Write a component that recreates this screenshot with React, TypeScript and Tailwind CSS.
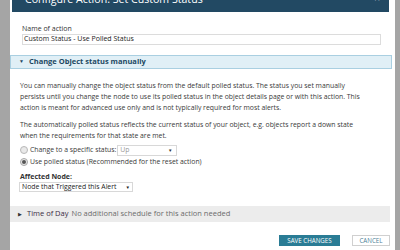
import React from "react";

export default function App() {
  const font = { fontFamily: '"Open Sans", "Noto Sans", sans-serif' };
  return (
    <div className="w-[400px] h-[250px] bg-[#a5a5a5] overflow-hidden flex" style={font}>
      <div className="ml-[10px] w-[385px] h-[250px] bg-white flex flex-col">
        {/* header */}
        <div className="mx-[2px] w-[377px] h-[12px] bg-[#224963] overflow-hidden flex items-start justify-between">
          <div className="ml-[13px] mt-[-6px] text-[10.6px] leading-none text-white whitespace-nowrap">
            Configure Action: Set Custom Status
          </div>
          <div className="mr-[9px] mt-[-7px] text-[10px] leading-none text-white">×</div>
        </div>
        {/* name of action */}
        <div className="ml-[12px] mt-[13px] text-[7px] leading-[8px] text-[#333]">Name of action</div>
        <div className="ml-[12px] mt-[1px] w-[359px] h-[11px] border border-[#dcdcdc] flex items-center px-[1px] text-[7px] text-[#222] whitespace-nowrap">
          Custom Status - Use Polled Status
        </div>
        {/* section header */}
        <div className="mt-[10px] w-[382px] h-[14px] bg-[#e0eff6] border border-[#a9cfe1] flex items-center text-[7.5px] font-bold text-[#1c4862]">
          <span className="ml-[8px] text-[5px] mr-[5px]">▼</span>
          Change Object status manually
        </div>
        {/* body */}
        <div className="ml-[10px] mr-[8px] text-[6.85px] text-[#3a3a3a] whitespace-nowrap">
          <p className="mt-[11px] leading-[11px]">
            You can manually change the object status from the default polled status. The status you set manually
            <br />
            persists until you change the node to use its polled status in the object details page or with this action. This
            <br />
            action is meant for advanced use only and is not typically required for most alerts.
          </p>
          <p className="mt-[6px] leading-[11px]">
            The automatically polled status reflects the current status of your object, e.g. objects report a down state
            <br />
            when the requirements for that state are met.
          </p>
          <div className="mt-[3px] h-[12px] flex items-center">
            <span className="w-[8px] h-[8px] rounded-full border border-[#b8b8b8] bg-[#e9e9e9]" />
            <span className="ml-[2px]">Change to a specific status:</span>
            <span className="ml-[1px] w-[60px] h-[11px] border border-[#d8d8d8] flex items-center justify-between px-[2px] text-[#999]">
              <span>Up</span>
              <span className="text-[4.5px] text-[#333] mr-[2px]">▼</span>
            </span>
          </div>
          <div className="h-[12px] flex items-center">
            <span className="w-[8px] h-[8px] rounded-full border border-[#a8a8a8] bg-[#e9e9e9] flex items-center justify-center">
              <span className="w-[4px] h-[4px] rounded-full bg-[#555]" />
            </span>
            <span className="ml-[2px]">Use polled status (Recommended for the reset action)</span>
          </div>
          <div className="mt-[4px] leading-[9px] font-bold text-[#333] text-[7px]">Affected Node:</div>
          <div className="mt-[1px] ml-[-1px] w-[114px] h-[10px] border border-[#d8d8d8] flex items-center justify-between px-[2px] text-[#222]">
            <span>Node that Triggered this Alert</span>
            <span className="text-[4.5px] text-[#222]">▼</span>
          </div>
        </div>
        {/* time of day */}
        <div className="mt-[14px] w-[380px] h-[16px] bg-[#ececec] flex items-center text-[7.5px] whitespace-nowrap">
          <span className="ml-[8px] text-[4.5px] text-[#333] mr-[5px]">▶</span>
          <span className="text-[#3b2d45]">Time of Day</span>
          <span className="ml-[3px] text-[#6b6b6b]">No additional schedule for this action needed</span>
        </div>
        {/* buttons */}
        <div className="mt-[13px] flex items-start">
          <div className="ml-[269px] w-[61px] h-[11px] bg-[#2a7c95] text-white text-[6.2px] flex items-center justify-center">
            SAVE CHANGES
          </div>
          <div className="ml-[12px] w-[38px] h-[11px] border border-[#d0d0d0] text-[#4d7f98] text-[6.2px] flex items-center justify-center">
            CANCEL
          </div>
        </div>
      </div>
    </div>
  );
}
